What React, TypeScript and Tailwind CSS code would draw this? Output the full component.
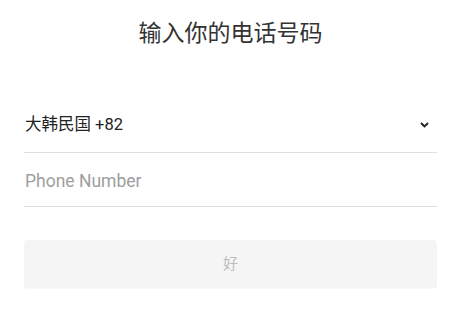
import React from 'react';

export default function App() {
  return (
    <div
      className="w-[461px] h-[312px] bg-white px-6"
      style={{ fontFamily: '"Roboto", "Noto Sans CJK SC", sans-serif' }}
    >
      {/* Title */}
      <h1 className="pt-[18px] text-center text-[23px] leading-[32px] text-[#333333]">
        输入你的电话号码
      </h1>

      {/* Country selector */}
      <div className="mt-[55px] flex items-center justify-between h-[48px] border-b border-[#e0e0e0]">
        <span className="text-[16.5px] text-[#222222] pl-[1px] pb-[6px]">大韩民国 +82</span>
        <svg width="9" height="6" viewBox="0 0 9 6" className="mr-[8px] mb-[8px]">
          <path d="M1 1 L4.5 4.5 L8 1" fill="none" stroke="#222" strokeWidth="1.9" />
        </svg>
      </div>

      {/* Phone input */}
      <div className="flex items-center h-[54px] border-b border-[#e0e0e0]">
        <span className="text-[17.5px] text-[#9e9e9e] pl-[1px] pt-[4px]">Phone Number</span>
      </div>

      {/* Submit */}
      <button className="mt-[33px] w-full h-[48px] rounded-[4px] bg-[#f5f5f5] text-[15px] text-[#bdbdbd] shadow-[0_1px_1px_rgba(0,0,0,0.03)]">
        好
      </button>
    </div>
  );
}
